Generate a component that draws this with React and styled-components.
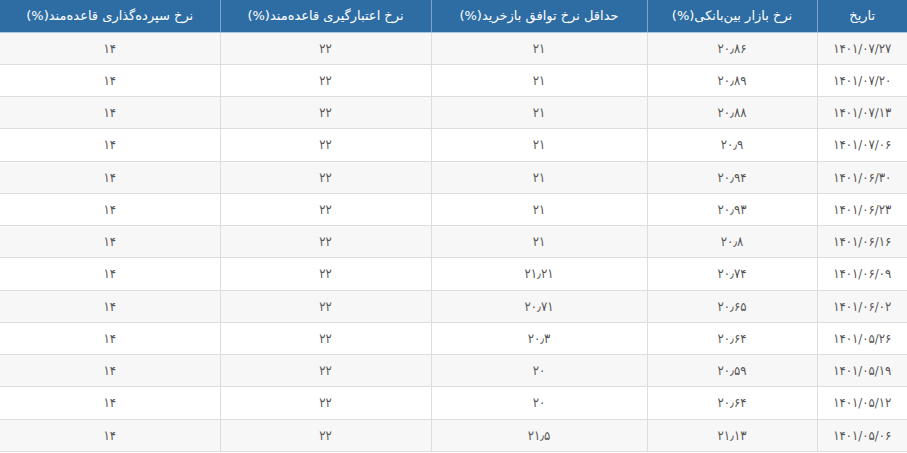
import React from 'react'
import styled, { createGlobalStyle } from 'styled-components'

const GlobalStyle = createGlobalStyle`
  html, body {
    margin: 0;
    padding: 0;
    background: #fff;
  }
  body {
    font-family: "DejaVu Sans", "Noto Sans", sans-serif;
  }
  *, *::before, *::after {
    box-sizing: border-box;
  }
`

const Table = styled.table`
  width: 907px;
  border-collapse: collapse;
  table-layout: fixed;
  direction: rtl;
`

const Col = styled.col`
  width: ${(p) => p.$w}px;
`

const HeadCell = styled.th`
  height: 32px;
  padding: 0 4px;
  background: #2e6da4;
  color: #fff;
  font-size: 13px;
  font-weight: normal;
  text-align: center;
  border-left: 1px solid #7ea6cc;
  border-bottom: 1px solid #a9c8e4;
  white-space: nowrap;
  &:last-child {
    border-left: none;
  }
`

const Row = styled.tr`
  background: ${(p) => (p.$odd ? '#f7f7f7' : '#fff')};
`

const Cell = styled.td`
  height: 32.25px;
  padding: 0 4px;
  font-family: "DejaVu Sans Condensed", "DejaVu Sans", sans-serif;
  font-size: 13px;
  color: #555;
  text-align: center;
  border-bottom: 1px solid #ddd;
  border-left: 1px solid #ddd;
  &:last-child {
    border-left: none;
  }
`

const columns = [
  { title: 'تاریخ', w: 90 },
  { title: 'نرخ بازار بین‌بانکی(%)', w: 170 },
  { title: 'حداقل نرخ توافق بازخرید(%)', w: 216 },
  { title: 'نرخ اعتبارگیری قاعده‌مند(%)', w: 211 },
  { title: 'نرخ سپرده‌گذاری قاعده‌مند(%)', w: 220 },
]

const rows = [
  ['۱۴۰۱/۰۷/۲۷', '۲۰٫۸۶', '۲۱', '۲۲', '۱۴'],
  ['۱۴۰۱/۰۷/۲۰', '۲۰٫۸۹', '۲۱', '۲۲', '۱۴'],
  ['۱۴۰۱/۰۷/۱۳', '۲۰٫۸۸', '۲۱', '۲۲', '۱۴'],
  ['۱۴۰۱/۰۷/۰۶', '۲۰٫۹', '۲۱', '۲۲', '۱۴'],
  ['۱۴۰۱/۰۶/۳۰', '۲۰٫۹۴', '۲۱', '۲۲', '۱۴'],
  ['۱۴۰۱/۰۶/۲۳', '۲۰٫۹۳', '۲۱', '۲۲', '۱۴'],
  ['۱۴۰۱/۰۶/۱۶', '۲۰٫۸', '۲۱', '۲۲', '۱۴'],
  ['۱۴۰۱/۰۶/۰۹', '۲۰٫۷۴', '۲۱٫۲۱', '۲۲', '۱۴'],
  ['۱۴۰۱/۰۶/۰۲', '۲۰٫۶۵', '۲۰٫۷۱', '۲۲', '۱۴'],
  ['۱۴۰۱/۰۵/۲۶', '۲۰٫۶۴', '۲۰٫۳', '۲۲', '۱۴'],
  ['۱۴۰۱/۰۵/۱۹', '۲۰٫۵۹', '۲۰', '۲۲', '۱۴'],
  ['۱۴۰۱/۰۵/۱۲', '۲۰٫۶۴', '۲۰', '۲۲', '۱۴'],
  ['۱۴۰۱/۰۵/۰۶', '۲۱٫۱۳', '۲۱٫۵', '۲۲', '۱۴'],
]

export default function App() {
  return (
    <>
      <GlobalStyle />
      <Table>
        <colgroup>
          {columns.map((c) => (
            <Col key={c.title} $w={c.w} />
          ))}
        </colgroup>
        <thead>
          <tr>
            {columns.map((c) => (
              <HeadCell key={c.title}>{c.title}</HeadCell>
            ))}
          </tr>
        </thead>
        <tbody>
          {rows.map((r, i) => (
            <Row key={r[0]} $odd={i % 2 === 0}>
              {r.map((v, j) => (
                <Cell key={j}>{v}</Cell>
              ))}
            </Row>
          ))}
        </tbody>
      </Table>
    </>
  )
}
